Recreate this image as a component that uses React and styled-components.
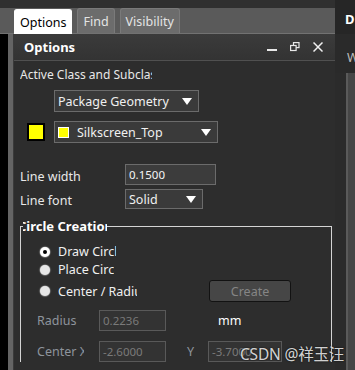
import React from "react";
import styled, { createGlobalStyle } from "styled-components";

const Global = createGlobalStyle`
  html, body { margin: 0; padding: 0; background: #2d2d2d; }
  body { font-family: "Noto Sans", "Open Sans", sans-serif; font-size: 12px; }
  * { box-sizing: border-box; }
`;

const Root = styled.div`
  display: flex;
  width: 355px;
  height: 370px;
  overflow: hidden;
  position: relative;
  background: #2d2d2d;
`;

const LeftArea = styled.div`
  width: 335px;
  display: flex;
  flex-direction: column;
`;

const TopStrip = styled.div`
  height: 8px;
  background: #303030;
`;

const TabBar = styled.div`
  height: 26px;
  background: #5a5a5a;
  border-bottom: 1px solid #727272;
  display: flex;
  align-items: flex-end;
  gap: 5px;
  padding-left: 14px;
`;

const Tab = styled.div`
  height: 25px;
  padding: 0 5px;
  display: flex;
  align-items: center;
  font-size: 12.5px;
  color: ${(p) => (p.$active ? "#000" : "#e4e4e4")};
  background: ${(p) => (p.$active ? "#ffffff" : "#6c6c6c")};
  border: 1px solid ${(p) => (p.$active ? "#ffffff" : "#7a7a7a")};
  border-bottom: none;
  border-radius: 3px 3px 0 0;
  margin-bottom: ${(p) => (p.$active ? "-1px" : "0")};
`;

const BodyRow = styled.div`
  flex: 1;
  display: flex;
`;

const Gutter = styled.div`
  width: 8px;
  background: #000;
`;

const Frame = styled.div`
  width: 6px;
  background: #646464;
  border-right: 1px solid #3a3a3a;
`;

const Panel = styled.div`
  flex: 1;
  display: flex;
  flex-direction: column;
  background: #2d2d2d;
  min-width: 0;
`;

const Header = styled.div`
  height: 27px;
  display: flex;
  align-items: center;
  padding: 0 12px 0 10px;
  background: linear-gradient(#3b3b3b, #333333);
  border-bottom: 1px solid #505050;
`;

const HeaderTitle = styled.div`
  flex: 1;
  color: #fff;
  font-weight: bold;
  font-size: 13px;
`;

const HeaderIcons = styled.div`
  display: flex;
  align-items: center;
  gap: 13px;
`;

const Body = styled.div`
  display: flex;
  flex-direction: column;
  padding-left: 6px;
  color: #e8e8e8;
`;

const Clip = styled.div`
  width: ${(p) => p.$w}px;
  overflow: hidden;
  white-space: nowrap;
  line-height: 16px;
`;

const Row = styled.div`
  display: flex;
  align-items: center;
  margin-top: ${(p) => p.$mt || 0}px;
  margin-left: ${(p) => p.$ml || 0}px;
`;

const Select = styled.div`
  width: ${(p) => p.$w}px;
  height: ${(p) => p.$h || 22}px;
  display: flex;
  align-items: center;
  padding: 0 6px 0 3px;
  background: #3a3a3a;
  border: 1px solid #6b6b6b;
  color: #f0f0f0;
  font-size: 12.5px;
  white-space: nowrap;
`;

const SelectText = styled.span`
  flex: 1;
  margin-left: ${(p) => p.$ml || 0}px;
`;

const Arrow = styled.span`
  width: 0;
  height: 0;
  border-left: 5px solid transparent;
  border-right: 5px solid transparent;
  border-top: 7px solid #ffffff;
`;

const Swatch = styled.div`
  width: ${(p) => p.$s}px;
  height: ${(p) => p.$s}px;
  background: #ffff00;
  border: ${(p) => p.$b};
  flex: none;
`;

const Label = styled.div`
  width: ${(p) => p.$w}px;
  color: ${(p) => (p.$dim ? "#8d949c" : "#e8e8e8")};
  font-size: 12.5px;
  white-space: nowrap;
  overflow: hidden;
  padding-top: ${(p) => p.$pt || 0}px;
`;

const Input = styled.div`
  width: ${(p) => p.$w}px;
  height: ${(p) => p.$h || 21}px;
  display: flex;
  align-items: center;
  padding-left: 3px;
  background: ${(p) => (p.$disabled ? "#333333" : "#3c3c3c")};
  border: 1px solid ${(p) => (p.$disabled ? "#595959" : "#6b6b6b")};
  color: ${(p) => (p.$disabled ? "#7a7a7a" : "#f4f4f4")};
  font-size: 11.5px;
  overflow: hidden;
  white-space: nowrap;
`;

const Group = styled.div`
  position: relative;
  margin: 17px 3px 0 0;
  border: 1px solid #d4d4d4;
  border-bottom: none;
  flex: 1;
  padding: 16px 0 0 16px;
  height: 160px;
`;

const GroupTitle = styled.div`
  position: absolute;
  top: -9px;
  left: 2px;
  width: 84px;
  overflow: hidden;
  background: #2d2d2d;
  color: #fff;
  font-weight: bold;
  font-size: 13px;
  line-height: 16px;
  white-space: nowrap;
`;

const GroupTitleText = styled.span`
  display: inline-block;
  margin-left: -5px;
`;

const RadioRow = styled.div`
  display: flex;
  align-items: center;
  height: ${(p) => p.$h}px;
  margin-top: ${(p) => p.$mt || 0}px;
  padding-left: 3px;
`;

const Radio = styled.span`
  width: 10px;
  height: 10px;
  border-radius: 50%;
  background: ${(p) => (p.$checked ? "#fff" : "#e6e6e6")};
  box-shadow: 0 0 1px 0.5px rgba(255, 255, 255, 0.5);
  display: flex;
  align-items: center;
  justify-content: center;
  flex: none;
  &::after {
    content: "";
    width: 4px;
    height: 4px;
    border-radius: 50%;
    background: ${(p) => (p.$checked ? "#000" : "transparent")};
  }
`;

const RadioText = styled.span`
  margin-left: 8px;
  width: ${(p) => p.$w}px;
  overflow: hidden;
  white-space: nowrap;
  font-size: 12.5px;
  color: #f0f0f0;
`;

const Button = styled.div`
  margin-left: ${(p) => p.$ml}px;
  width: 82px;
  height: 22px;
  display: flex;
  align-items: center;
  justify-content: center;
  background: #464646;
  border: 1px solid #121212;
  border-radius: 3px;
  color: #858585;
  font-size: 12.5px;
`;

const Grid = styled.div`
  display: grid;
  grid-template-columns: 62px 67px 42px auto;
  grid-auto-rows: 21px;
  row-gap: 10px;
  align-items: center;
  margin-top: ${(p) => p.$mt}px;
`;

const Unit = styled.div`
  color: #fff;
  font-size: 12.5px;
  padding-left: 10px;
`;

const YLabel = styled.div`
  color: #8d949c;
  font-size: 12.5px;
  padding-left: 21px;
`;

const RightPanel = styled.div`
  width: 20px;
  background: #2b2b2b;
  display: flex;
  flex-direction: column;
`;

const RightHead = styled.div`
  height: 34px;
  background: #262626;
  color: #fff;
  font-weight: bold;
  font-size: 13px;
  padding: 11px 0 0 10px;
  line-height: 16px;
`;

const RightSub = styled.div`
  color: #bcbcbc;
  font-size: 12.5px;
  padding: 15px 0 0 12px;
  height: 39px;
  background: #2a2a2a;
`;

const RightBox = styled.div`
  flex: 1;
  margin-left: 11px;
  background: #464646;
  border-left: 2px solid #5a5a5a;
`;

const Watermark = styled.div`
  position: absolute;
  left: 240px;
  top: 342px;
  font-family: "Noto Sans", "Noto Sans CJK SC", sans-serif;
  font-size: 15.5px;
  color: rgba(235, 235, 235, 0.9);
  text-shadow: 0 0 2px rgba(0, 0, 0, 0.8);
  white-space: nowrap;
  letter-spacing: -0.2px;
`;

const Minimize = () => (
  <svg width="10" height="10" viewBox="0 0 10 10">
    <rect x="0" y="7" width="10" height="2" fill="#e8e8e8" />
  </svg>
);

const Restore = () => (
  <svg width="10" height="10" viewBox="0 0 10 10" fill="none" stroke="#e8e8e8" strokeWidth="1.2">
    <rect x="3.5" y="0.6" width="5.5" height="5" />
    <rect x="0.6" y="3.5" width="5.5" height="5" fill="#363636" />
  </svg>
);

const Close = () => (
  <svg width="10" height="10" viewBox="0 0 10 10" stroke="#f0f0f0" strokeWidth="1.5">
    <line x1="0.5" y1="0.5" x2="9.5" y2="9.5" />
    <line x1="9.5" y1="0.5" x2="0.5" y2="9.5" />
  </svg>
);

export default function App() {
  return (
    <>
      <Global />
      <Root>
        <LeftArea>
          <TopStrip />
          <TabBar>
            <Tab $active>Options</Tab>
            <Tab>Find</Tab>
            <Tab>Visibility</Tab>
          </TabBar>
          <BodyRow>
            <Gutter />
            <Frame />
            <Panel>
              <Header>
                <HeaderTitle>Options</HeaderTitle>
                <HeaderIcons>
                  <Minimize />
                  <Restore />
                  <Close />
                </HeaderIcons>
              </Header>
              <Body>
                <Row $mt={6}>
                  <Clip $w={132}>Active Class and Subclass</Clip>
                </Row>
                <Row $mt={7} $ml={34}>
                  <Select $w={145}>
                    <SelectText>Package Geometry</SelectText>
                    <Arrow />
                  </Select>
                </Row>
                <Row $mt={9} $ml={7}>
                  <Swatch $s={18} $b="2px solid #000" />
                  <Row $ml={9}>
                    <Select $w={164}>
                      <Swatch $s={11} $b="1px solid #fff" />
                      <SelectText $ml={8}>Silkscreen_Top</SelectText>
                      <Arrow />
                    </Select>
                  </Row>
                </Row>
                <Row $mt={21}>
                  <Label $w={105} $pt={3}>Line width</Label>
                  <Input $w={91}>0.1500</Input>
                </Row>
                <Row $mt={4}>
                  <Label $w={105} $pt={3}>Line font</Label>
                  <Select $w={78} $h={20}>
                    <SelectText>Solid</SelectText>
                    <Arrow />
                  </Select>
                </Row>
                <Group>
                  <GroupTitle>
                    <GroupTitleText>Circle Creation</GroupTitleText>
                  </GroupTitle>
                  <RadioRow $h={17}>
                    <Radio $checked />
                    <RadioText $w={58}>Draw Circle</RadioText>
                  </RadioRow>
                  <RadioRow $h={17} $mt={1}>
                    <Radio />
                    <RadioText $w={56}>Place Circle</RadioText>
                  </RadioRow>
                  <RadioRow $h={22} $mt={2}>
                    <Radio />
                    <RadioText $w={79}>Center / Radius</RadioText>
                    <Button $ml={72}>Create</Button>
                  </RadioRow>
                  <Grid $mt={8}>
                    <Label $w={62} $dim>Radius</Label>
                    <Input $w={67} $disabled>0.2236</Input>
                    <span />
                    <Unit>mm</Unit>
                    <Label $w={47} $dim>Center X</Label>
                    <Input $w={67} $disabled>-2.6000</Input>
                    <YLabel>Y</YLabel>
                    <Input $w={74} $disabled>-3.7000</Input>
                  </Grid>
                </Group>
              </Body>
            </Panel>
          </BodyRow>
        </LeftArea>
        <RightPanel>
          <RightHead>D</RightHead>
          <RightSub>W</RightSub>
          <RightBox />
        </RightPanel>
        <Watermark>CSDN @祥玉汪</Watermark>
      </Root>
    </>
  );
}
